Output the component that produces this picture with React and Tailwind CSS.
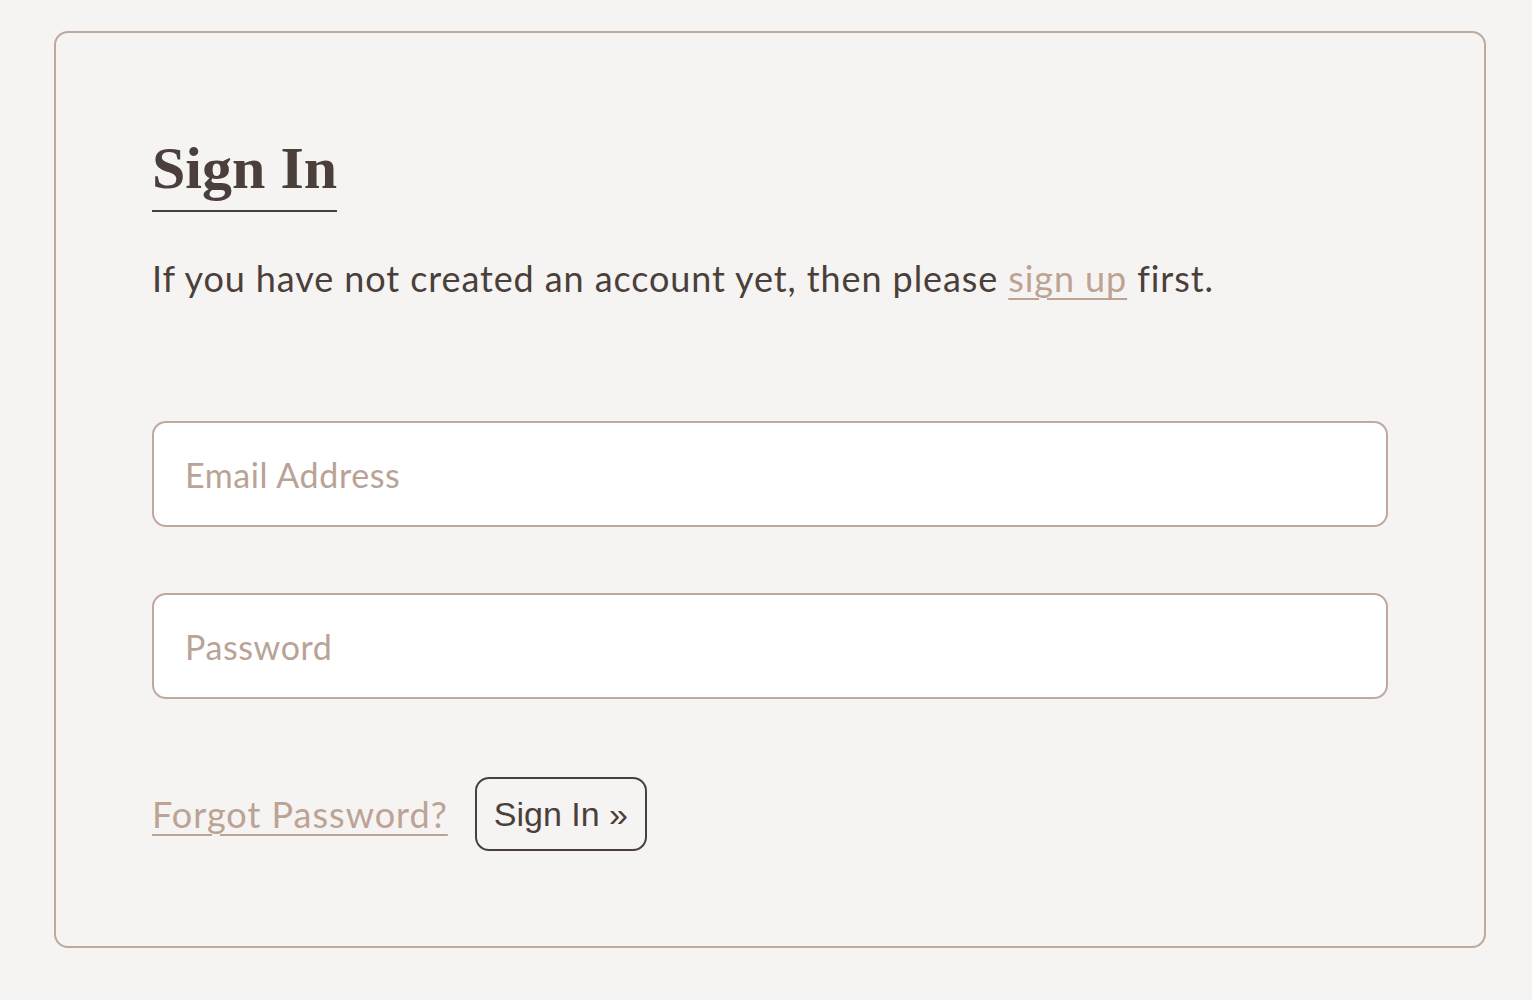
export default function App() {
  return (
    <div className="min-h-[1000px] w-full bg-[#f6f4f2] pt-[31px] pl-[54px]" style={{ fontFamily: "Lato, 'Noto Sans', sans-serif" }}>
      <div className="w-[1432px] h-[917px] rounded-[14px] border-2 border-[#bfa99c] pt-[105px] pl-[96px] pr-[96px]">
        <h1
          className="inline-block text-[60px] leading-none font-bold text-[#4a3f3a] pb-[12px] border-b-2 border-[#4a3f3a]"
          style={{ fontFamily: "'Liberation Serif', serif" }}
        >
          Sign In
        </h1>
        <p className="mt-[42px] text-[36px] leading-[48px] tracking-[0.9px] text-[#4a3f3a]">
          If you have not created an account yet, then please{" "}
          <a href="#" className="text-[#bca394] underline underline-offset-[6px] decoration-2">sign up</a> first.
        </p>
        <div className="mt-[119px] flex flex-col gap-[66px]">
          <input
            type="email"
            placeholder="Email Address"
            className="h-[106px] w-full rounded-[14px] border-2 border-[#bfa99c] bg-white px-[31px] text-[34px] tracking-[0.6px] text-[#4a3f3a] outline-none placeholder:text-[#b9a396]"
          />
          <input
            type="password"
            placeholder="Password"
            className="h-[106px] w-full rounded-[14px] border-2 border-[#bfa99c] bg-white px-[31px] text-[34px] tracking-[0.6px] text-[#4a3f3a] outline-none placeholder:text-[#b9a396]"
          />
        </div>
        <div className="mt-[78px] flex items-center gap-[27px]">
          <a href="#" className="text-[36px] tracking-[1px] text-[#bca394] underline underline-offset-[6px] decoration-2">Forgot Password?</a>
          <button
            className="h-[74px] rounded-[14px] border-2 border-[#4a3f3a] px-[17px] text-[34px] text-[#4a3f3a]"
            style={{ fontFamily: "'Liberation Sans', Arial, sans-serif" }}
          >
            Sign In »
          </button>
        </div>
      </div>
    </div>
  );
}
